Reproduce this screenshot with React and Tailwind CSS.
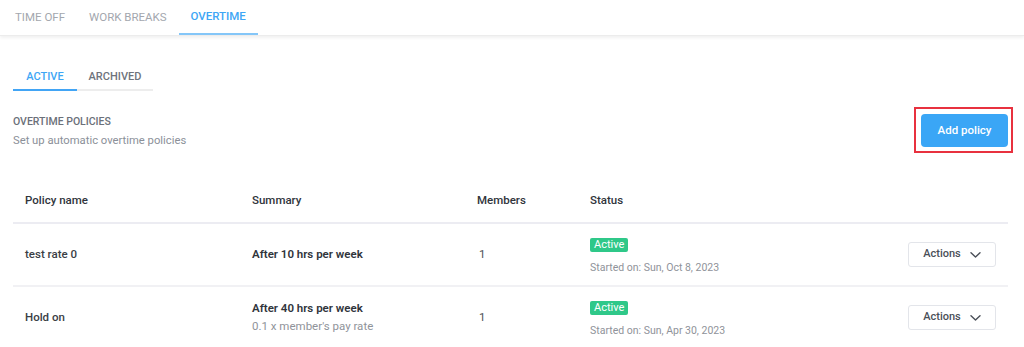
import React from 'react';

const policies = [
  { name: 'test rate 0', summary: 'After 10 hrs per week', detail: null, members: 1, started: 'Sun, Oct 8, 2023' },
  { name: 'Hold on', summary: 'After 40 hrs per week', detail: "0.1 x member's pay rate", members: 1, started: 'Sun, Apr 30, 2023' },
];

const Chevron = () => (
  <svg width="11" height="6" viewBox="0 0 11 6" fill="none" stroke="#4a4f58" strokeWidth="1.4" strokeLinecap="round" strokeLinejoin="round">
    <polyline points="1,0.8 5.5,5 10,0.8" />
  </svg>
);

const App = () => {
  return (
    <div className="w-[1024px] h-[347px] overflow-hidden bg-white font-['Roboto',sans-serif]">
      {/* Top tabs */}
      <div className="flex h-[36px] pl-[3px] border-b border-[#ececec] shadow-[0_2px_3px_rgba(0,0,0,0.06)]">
        <div className="px-3 flex items-center text-[11.5px] text-[#a3a7ae]">TIME OFF</div>
        <div className="px-3 flex items-center text-[11.5px] text-[#a3a7ae]">WORK BREAKS</div>
        <div className="px-3 flex items-center text-[11.5px] font-medium text-[#3ea6f5] border-b-2 border-[#84c6f8] w-[79px] justify-center">OVERTIME</div>
      </div>

      <div className="pl-[13px] pr-[16px]">
        {/* Sub tabs */}
        <div className="flex mt-[28px] h-[27px]">
          <div className="w-[64px] flex items-center justify-center pt-[2px] text-[11px] font-medium text-[#3ea6f5] border-b-2 border-[#42a5f5]">ACTIVE</div>
          <div className="w-[76px] flex items-center justify-center pt-[2px] text-[11px] font-medium text-[#6e737c] border-b-2 border-[#ededed]">ARCHIVED</div>
        </div>

        {/* Section header */}
        <div className="flex items-start justify-between mt-[16px]">
          <div className="pt-[8px]">
            <p className="text-[10.5px] font-medium text-[#6b7079] leading-[14px]">OVERTIME POLICIES</p>
            <p className="text-[11.25px] text-[#8b9099] leading-[14px] mt-[5px]">Set up automatic overtime policies</p>
          </div>
          <div className="border-2 border-[#e8313f] pl-[5px] pr-[3px] pt-[5px] pb-[4px] mr-[-5px]">
            <button className="w-[87px] h-[33px] rounded-[4px] bg-[#3aa6f6] text-white text-[11.5px] font-medium">Add policy</button>
          </div>
        </div>

        {/* Table */}
        <div className="mt-[27px]">
          <div className="grid grid-cols-[227px_225px_113px_1fr_auto] items-center h-[44px] border-b-2 border-[#ececf2] pl-3 pr-3 text-[11.5px] font-medium text-[#30343b]">
            <div>Policy name</div>
            <div>Summary</div>
            <div>Members</div>
            <div>Status</div>
            <div></div>
          </div>
          {policies.map((p, i) => (
            <div
              key={i}
              className="grid grid-cols-[227px_225px_113px_1fr_auto] items-center h-[63px] border-b-2 border-[#f1f1f4] pl-3 pr-3"
            >
              <div className="text-[11.5px] font-medium text-[#3a3e45]">{p.name}</div>
              <div>
                <p className="text-[11.5px] font-semibold text-[#30343b] leading-[15px]">{p.summary}</p>
                {p.detail && <p className="text-[11.5px] text-[#8f939a] leading-[15px] mt-[3px]">{p.detail}</p>}
              </div>
              <div className="text-[11.5px] text-[#4b4f56] pl-[2px]">{p.members}</div>
              <div className="mt-[-3px]">
                <span className="inline-block bg-[#2fc889] text-white text-[11px] leading-[14px] px-[4px] rounded-[2px]">Active</span>
                <p className="text-[10.5px] text-[#8f939a] mt-[6px] leading-[14px]">Started on: {p.started}</p>
              </div>
              <button className="w-[88px] h-[25px] border border-[#e3e5ea] rounded-[3px] flex items-center justify-center gap-[9px] text-[11px] font-medium text-[#4a4f58]">
                Actions
                <Chevron />
              </button>
            </div>
          ))}
        </div>
      </div>
    </div>
  );
};

export default App;
